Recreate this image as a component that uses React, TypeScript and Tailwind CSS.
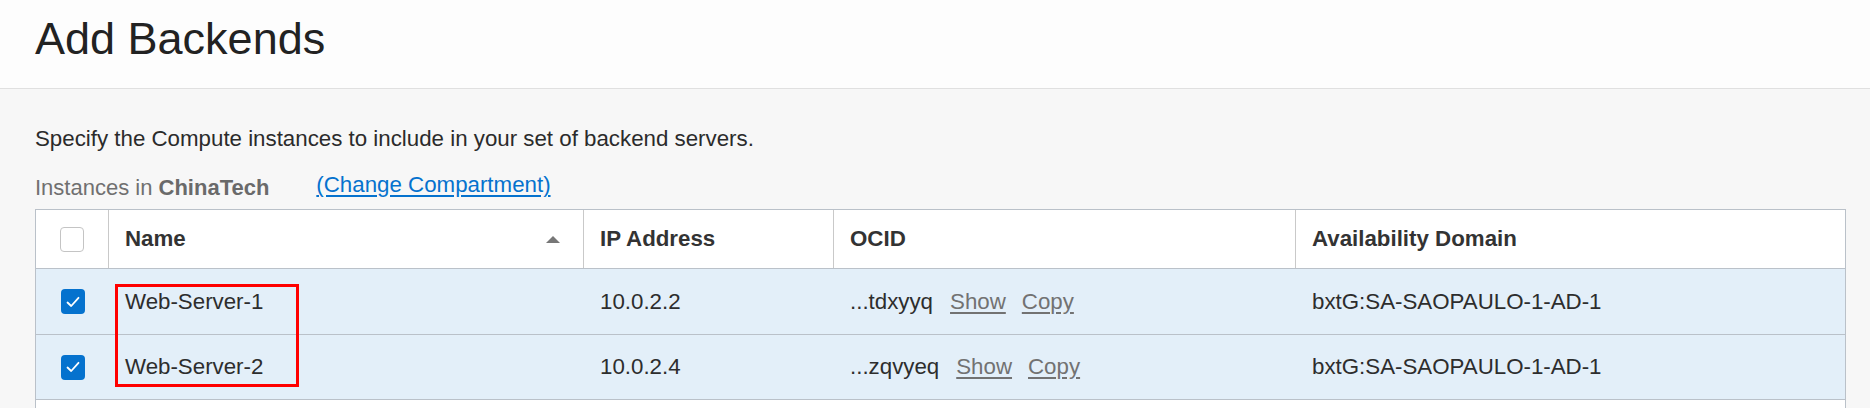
import React from "react";

type Instance = {
  name: string;
  ip: string;
  ocid: string;
  domain: string;
};

const instances: Instance[] = [
  { name: "Web-Server-1", ip: "10.0.2.2", ocid: "...tdxyyq", domain: "bxtG:SA-SAOPAULO-1-AD-1" },
  { name: "Web-Server-2", ip: "10.0.2.4", ocid: "...zqvyeq", domain: "bxtG:SA-SAOPAULO-1-AD-1" },
];

const cols = "grid grid-cols-[73px_475px_250px_462px_1fr]";

function Checkbox({ checked }: { checked?: boolean }) {
  if (checked) {
    return (
      <div className="flex h-[25px] w-[24px] items-center justify-center rounded-[4px] bg-[#0572ce]">
        <svg width="16" height="16" viewBox="0 0 16 16" fill="none">
          <path d="M2.5 8.5 L6.2 12 L13.5 3.8" stroke="white" strokeWidth="1.8" strokeLinecap="round" strokeLinejoin="round" />
        </svg>
      </div>
    );
  }
  return <div className="h-[25px] w-[24px] rounded-[4px] border border-[#c4c4c4] bg-white" />;
}

export default function App() {
  return (
    <div className="min-h-[408px] w-[1870px] bg-[#f7f7f7] font-['Liberation_Sans',Arial,sans-serif] text-[22.3px] text-[#2d2d2d]">
      {/* page header */}
      <div className="h-[89px] border-b border-[#e0e0e0] bg-[#fdfdfd] px-[35px] pt-[16px]">
        <h1 className="text-[45px] leading-[45px] font-normal text-[#222]">Add Backends</h1>
      </div>

      <div className="px-[35px] pt-[39px]">
        <p className="leading-[22px] text-[#2b2b2b]">Specify the Compute instances to include in your set of backend servers.</p>

        <div className="mt-[27px] flex items-start leading-[22px]">
          <span className="text-[22px] text-[#707070]">
            Instances in <span className="font-bold text-[#6a6a6a]">ChinaTech</span>
          </span>
          <a href="#" className="relative -top-[3px] ml-[47px] text-[#0572ce] underline underline-offset-[3px]">
            (Change Compartment)
          </a>
        </div>

        {/* instances table */}
        <div className="relative mt-[10px] w-[1811px] border border-b-0 border-[#bac1c9] bg-white">
          <div className={`${cols} h-[59px] border-b border-[#bac1c9] font-bold text-[#333]`}>
            <div className="flex items-center justify-center border-r border-[#c9c9c9]">
              <Checkbox />
            </div>
            <div className="flex items-center justify-between border-r border-[#c9c9c9] pl-4 pr-[23px]">
              <span>Name</span>
              <svg width="14" height="7" viewBox="0 0 14 7">
                <path d="M0 7 L7 0 L14 7 Z" fill="#777" />
              </svg>
            </div>
            <div className="flex items-center border-r border-[#c9c9c9] pl-4">IP Address</div>
            <div className="flex items-center border-r border-[#c9c9c9] pl-4">OCID</div>
            <div className="flex items-center pl-4">Availability Domain</div>
          </div>

          {instances.map((row, i) => (
            <div key={row.name} className={`${cols} ${i === 0 ? "h-[66px]" : "h-[65px]"} border-b border-[#bac1c9] bg-[#e3eff9]`}>
              <div className="flex items-center justify-center">
                <Checkbox checked />
              </div>
              <div className="flex items-center pl-4">{row.name}</div>
              <div className="flex items-center pl-4">{row.ip}</div>
              <div className="flex items-center pl-4">
                <span>{row.ocid}</span>
                <a href="#" className="ml-[17px] text-[#727272] underline underline-offset-[3px]">Show</a>
                <a href="#" className="ml-[16px] text-[#727272] underline underline-offset-[3px]">Copy</a>
              </div>
              <div className="flex items-center pl-4">{row.domain}</div>
            </div>
          ))}

          <div className="h-[60px] bg-white" />

          {/* highlight box drawn over the names */}
          <div className="pointer-events-none absolute left-[79px] top-[74px] h-[103px] w-[184px] border-[3px] border-[#ff0000]" />
        </div>
      </div>
    </div>
  );
}
